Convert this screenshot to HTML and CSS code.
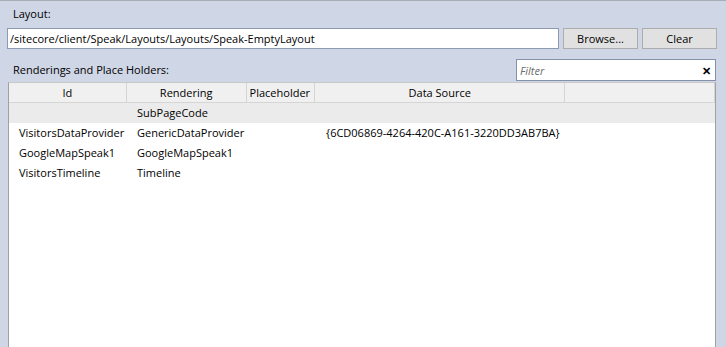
FILE: index.html
```html
<!DOCTYPE html>
<html lang="en">
<head>
  <meta charset="UTF-8" />
  <title>Layout Details</title>
  <link rel="stylesheet" href="styles.css">
</head>
<body>

<div class="panel">
  <div class="field-label">Layout:</div>
  <div class="layout-row">
    <input type="text" class="layout-path" value="/sitecore/client/Speak/Layouts/Layouts/Speak-EmptyLayout" />
    <button type="button" class="btn">Browse...</button>
    <button type="button" class="btn">Clear</button>
  </div>

  <div class="renderings-bar">
    <div class="field-label">Renderings and Place Holders:</div>
    <div class="filter-box">
      <input type="text" placeholder="Filter" />
      <span class="filter-clear">&#x2715;</span>
    </div>
  </div>

  <div class="grid">
    <div class="grid-row grid-head">
      <div class="cell col-id">Id</div>
      <div class="cell col-rendering">Rendering</div>
      <div class="cell col-placeholder">Placeholder</div>
      <div class="cell col-source">Data Source</div>
      <div class="cell col-rest"></div>
    </div>
    <div class="grid-row grid-group">
      <div class="cell col-id"></div>
      <div class="cell col-rendering">SubPageCode</div>
    </div>
    <div class="grid-row">
      <div class="cell col-id">VisitorsDataProvider</div>
      <div class="cell col-rendering">GenericDataProvider</div>
      <div class="cell col-placeholder"></div>
      <div class="cell col-source">{6CD06869-4264-420C-A161-3220DD3AB7BA}</div>
    </div>
    <div class="grid-row">
      <div class="cell col-id">GoogleMapSpeak1</div>
      <div class="cell col-rendering">GoogleMapSpeak1</div>
    </div>
    <div class="grid-row">
      <div class="cell col-id">VisitorsTimeline</div>
      <div class="cell col-rendering">Timeline</div>
    </div>
  </div>
</div>

</body>
</html>
```

FILE: styles.css
```css
html, body {
  height: 100%;
}
body {
  margin: 0;
  background-color: #cfd6e5;
  font-family: 'Segoe UI', 'Open Sans', sans-serif;
  font-size: 11px;
  color: #000;
  overflow: hidden;
}
.panel {
  height: 100%;
  box-sizing: border-box;
  border-top: 1px solid #a9adb5;
  padding: 5px 9px 0 7px;
  display: flex;
  flex-direction: column;
}
.field-label {
  padding-left: 6px;
  line-height: 16px;
}
.layout-row {
  display: flex;
  gap: 4px;
  margin-top: 6px;
}
.layout-path {
  flex: 1;
  height: 21px;
  box-sizing: border-box;
  margin: 0;
  padding: 0 2px;
  border: 1px solid #8c9bb3;
  font-family: inherit;
  font-size: 11px;
  color: #000;
}
.btn {
  width: 75px;
  height: 21px;
  box-sizing: border-box;
  margin: 0;
  padding: 0;
  background-color: #e1e1e1;
  border: 1px solid #adadad;
  font-family: inherit;
  font-size: 11px;
  color: #000;
}
.renderings-bar {
  display: flex;
  align-items: center;
  justify-content: space-between;
  margin-top: 10px;
}
.filter-box {
  width: 200px;
  height: 22px;
  box-sizing: border-box;
  border: 1px solid #8391ab;
  background: #fff;
  display: flex;
  align-items: center;
  margin-right: 1px;
}
.filter-box input {
  flex: 1;
  min-width: 0;
  border: none;
  outline: none;
  padding: 0 3px;
  font-family: inherit;
  font-size: 11px;
  font-style: italic;
}
.filter-box input::placeholder {
  color: #6d6d6d;
}
.filter-clear {
  width: 18px;
  font-size: 11px;
  font-weight: bold;
  text-align: center;
}
.grid {
  flex: 1;
  margin: 1px 1px 0 1px;
  background: #fff;
  border: 1px solid #a0a0a0;
  border-top-color: #c8c8c8;
  border-bottom: none;
}
.grid-row {
  display: flex;
  height: 20px;
  line-height: 20px;
}
.cell {
  box-sizing: border-box;
  padding-left: 10px;
  white-space: nowrap;
}
.col-id { width: 118px; }
.col-rendering { width: 120px; }
.col-placeholder { width: 69px; }
.col-source { width: 250px; }
.col-rest { flex: 1; }
.grid-head {
  background: #f0f0f0;
  border-bottom: 1px solid #d5d5d5;
  height: 19px;
  line-height: 19px;
}
.grid-head .cell {
  padding-left: 0;
  text-align: center;
  border-right: 1px solid #d5d5d5;
}
.grid-head .col-placeholder {
  padding-left: 3px;
  text-align: left;
}
.grid-head .col-rest {
  flex: none;
  width: 150px;
}
.grid-group {
  background: #ebebeb;
}
```
